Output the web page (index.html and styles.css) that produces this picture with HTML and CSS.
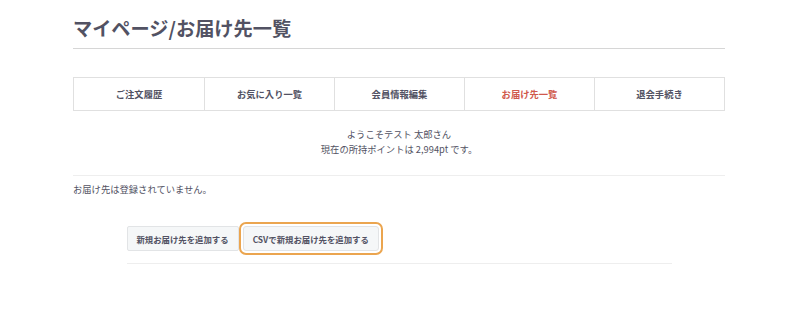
FILE: index.html
```html
<!DOCTYPE html>
<html lang="ja">
<head>
<meta charset="utf-8">
<link rel="stylesheet" href="styles.css">
</head>
<body>
<div class="page">
  <h1 class="title">マイページ/お届け先一覧</h1>
  <ul class="nav">
    <li class="nav-item">ご注文履歴</li>
    <li class="nav-item">お気に入り一覧</li>
    <li class="nav-item">会員情報編集</li>
    <li class="nav-item is-active">お届け先一覧</li>
    <li class="nav-item">退会手続き</li>
  </ul>
  <div class="welcome">
    <p>ようこそテスト 太郎さん</p>
    <p>現在の所持ポイントは 2,994pt です。</p>
  </div>
  <p class="message">お届け先は登録されていません。</p>
  <div class="actions">
    <div class="btn-row">
      <button class="btn">新規お届け先を追加する</button>
      <button class="btn is-focus">CSVで新規お届け先を追加する</button>
    </div>
  </div>
</div>
</body>
</html>
```
FILE: styles.css
```css
html, body {
  margin: 0;
  padding: 0;
  background: #fff;
}
body {
  font-family: "Noto Sans CJK JP", "Noto Sans", sans-serif;
  color: #525263;
  font-size: 9.3px;
}
.page {
  width: 652px;
  margin: 0 auto;
}
.title {
  margin: 0;
  padding-top: 13px;
  padding-bottom: 5px;
  font-size: 19.2px;
  line-height: 30px;
  font-weight: 700;
  border-bottom: 1px solid #d6d6d6;
}
.nav {
  list-style: none;
  margin: 28px 0 0;
  padding: 0;
  display: grid;
  grid-template-columns: repeat(5, 1fr);
  border: 1px solid #e0e0e0;
  height: 32px;
}
.nav-item {
  display: flex;
  align-items: center;
  justify-content: center;
  font-weight: 700;
  border-left: 1px solid #e0e0e0;
}
.nav-item:first-child { border-left: none; }
.nav-item.is-active { color: #d0594c; }
.welcome {
  margin-top: 16px;
  padding-bottom: 18px;
  text-align: center;
  line-height: 15px;
  border-bottom: 1px solid #eeeeee;
}
.welcome p { margin: 0; }
.message {
  margin: 6px 0 0;
  line-height: 15px;
}
.actions {
  width: 545px;
  margin: 29px auto 0;
  padding-bottom: 12px;
  border-bottom: 1px solid #eeeeee;
}
.btn-row {
  display: flex;
  gap: 4px;
}
.btn {
  font-family: inherit;
  font-size: 8.4px;
  font-weight: 700;
  color: #525263;
  background: #f5f7f8;
  border: 1px solid #e2e4e6;
  border-radius: 2px;
  height: 25px;
  padding: 0 9px;
  margin: 0;
}
.btn.is-focus {
  outline: 2px solid #eba54f;
  outline-offset: 2px;
  border-radius: 3px;
}
```
